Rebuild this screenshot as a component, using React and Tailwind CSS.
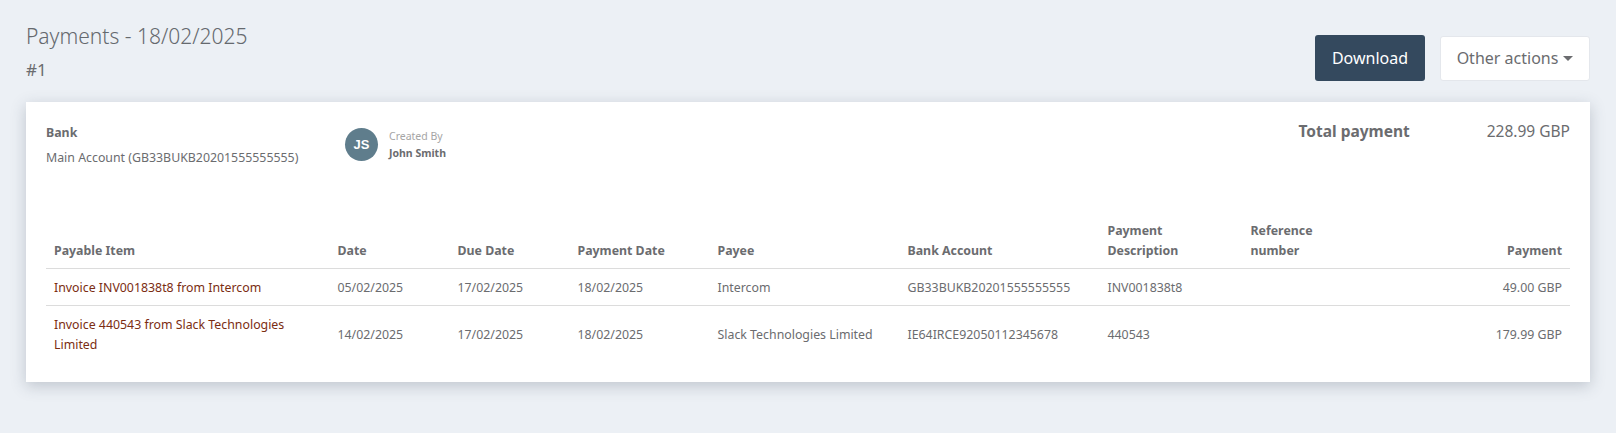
const rows = [
  {
    item: 'Invoice INV001838t8 from Intercom',
    date: '05/02/2025',
    due: '17/02/2025',
    paid: '18/02/2025',
    payee: 'Intercom',
    account: 'GB33BUKB20201555555555',
    description: 'INV001838t8',
    amount: '49.00 GBP',
  },
  {
    item: 'Invoice 440543 from Slack Technologies Limited',
    date: '14/02/2025',
    due: '17/02/2025',
    paid: '18/02/2025',
    payee: 'Slack Technologies Limited',
    account: 'IE64IRCE92050112345678',
    description: '440543',
    amount: '179.99 GBP',
  },
];

export default function App() {
  return (
    <div className="h-[433px] bg-[#ecf0f5] px-[26px] pt-[20px] font-['Noto_Sans',sans-serif] text-[#6b6c6f] overflow-hidden">
      <div className="flex justify-between items-start h-[82px]">
        <div>
          <h1 className="text-[21px] leading-[32px] font-light text-[#65696e]">Payments - 18/02/2025</h1>
          <p className="text-[17px] leading-[24px] mt-[6px]">#1</p>
        </div>
        <div className="flex items-center gap-[15px] pt-[15px]">
          <button className="h-[46px] w-[110px] bg-[#34495e] text-white text-[16px] rounded-[3px]">Download</button>
          <button className="h-[45px] w-[150px] bg-white border border-[#e4e7ec] text-[16px] rounded-[3px] flex items-center justify-center gap-[5px]">
            Other actions
            <span className="w-0 h-0 border-x-[5px] border-x-transparent border-t-[5px] border-t-[#6b6c6f]" />
          </button>
        </div>
      </div>

      <div className="bg-white h-[280px] px-[20px] pt-[20px] shadow-[0_4px_14px_rgba(60,70,90,0.25)]">
        <div className="flex h-[99px]">
          <div className="w-[299px] text-[12.35px] pt-[1px]">
            <p className="font-bold leading-[20px]">Bank</p>
            <p className="leading-[20px] mt-[5px]">Main Account (GB33BUKB20201555555555)</p>
          </div>
          <div className="flex gap-[11px] pt-[6px] h-fit">
            <div className="w-[33px] h-[33px] rounded-full bg-[#5f7d8c] text-white text-[13px] font-bold flex items-center justify-center font-['Liberation_Sans',sans-serif]">JS</div>
            <div className="text-[10.5px] leading-[17px]">
              <p className="text-[#a5a5a5]">Created By</p>
              <p className="font-bold">John Smith</p>
            </div>
          </div>
          <div className="ml-auto flex gap-[77px] text-[15.5px] leading-[24px] -mt-[3px] h-fit">
            <span className="font-bold">Total payment</span>
            <span>228.99 GBP</span>
          </div>
        </div>

        <table className="w-full table-fixed text-[12.35px] leading-[20px] border-collapse">
          <colgroup>
            <col className="w-[283.5px]" />
            <col className="w-[120px]" />
            <col className="w-[120px]" />
            <col className="w-[140px]" />
            <col className="w-[190px]" />
            <col className="w-[200px]" />
            <col className="w-[143px]" />
            <col />
          </colgroup>
          <thead>
            <tr className="border-b border-[#dcdcdc] align-bottom font-bold">
              <th className="px-2 pb-[7px] text-left">Payable Item</th>
              <th className="px-2 pb-[7px] text-left">Date</th>
              <th className="px-2 pb-[7px] text-left">Due Date</th>
              <th className="px-2 pb-[7px] text-left">Payment Date</th>
              <th className="px-2 pb-[7px] text-left">Payee</th>
              <th className="px-2 pb-[7px] text-left">Bank Account</th>
              <th className="px-2 pb-[7px] text-left">Payment<br />Description</th>
              <th className="px-2 pb-[7px] text-left">Reference<br />number</th>
              <th className="px-2 pb-[7px] text-right">Payment</th>
            </tr>
          </thead>
          <tbody>
            {rows.map((row) => (
              <tr key={row.account} className="border-b border-[#dcdcdc] last:border-0">
                <td className="px-2 pt-[9px] pb-[7px] text-[#7b2d12]">{row.item}</td>
                <td className="px-2 pt-[9px] pb-[7px]">{row.date}</td>
                <td className="px-2 pt-[9px] pb-[7px]">{row.due}</td>
                <td className="px-2 pt-[9px] pb-[7px]">{row.paid}</td>
                <td className="px-2 pt-[9px] pb-[7px]">{row.payee}</td>
                <td className="px-2 pt-[9px] pb-[7px]">{row.account}</td>
                <td className="px-2 pt-[9px] pb-[7px]">{row.description}</td>
                <td className="px-2 pt-[9px] pb-[7px]"></td>
                <td className="px-2 pt-[9px] pb-[7px] text-right">{row.amount}</td>
              </tr>
            ))}
          </tbody>
        </table>
      </div>
    </div>
  );
}
